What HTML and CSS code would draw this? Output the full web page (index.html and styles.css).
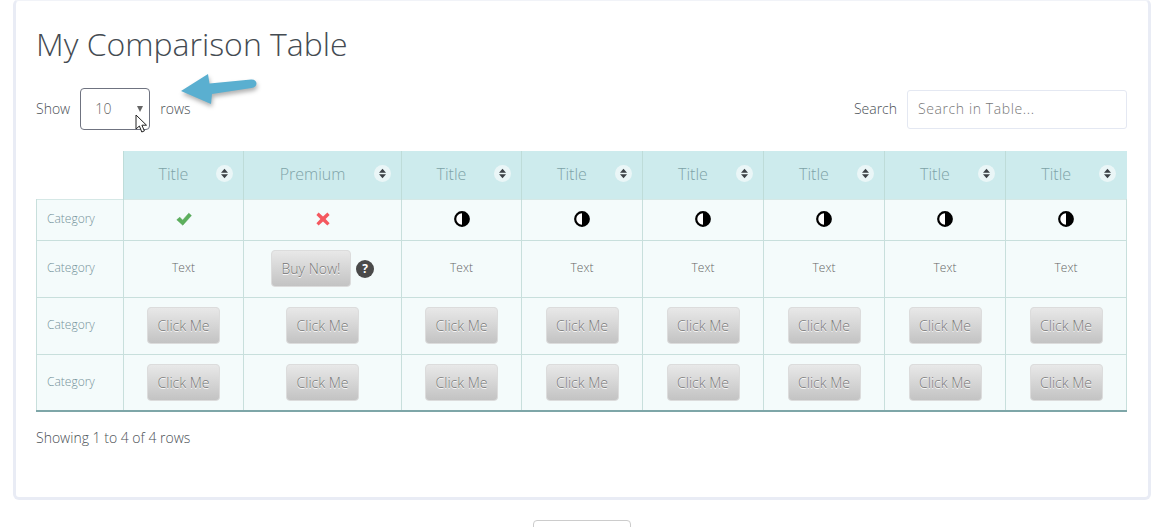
FILE: index.html
```html
<!DOCTYPE html>
<html lang="en">
<head>
<meta charset="utf-8">
<title>My Comparison Table</title>
<link rel="stylesheet" href="styles.css">
</head>
<body>
<svg class="sprites" width="0" height="0" aria-hidden="true">
  <defs>
    <symbol id="sort" viewBox="0 0 17 17"><circle cx="8.5" cy="8.5" r="8.5" fill="#eaf6f7"/><path d="M8.5 3.8 12 7.7H5ZM8.5 13.2 12 9.3H5Z" fill="#3c4146"/></symbol>
    <symbol id="half" viewBox="0 0 16 16"><circle cx="8" cy="8" r="6.800" fill="#fff" stroke="#000" stroke-width="2.200"/><path d="M8 1.200a6.800 6.800 0 0 1 0 13.600Z" fill="#000"/></symbol>
  </defs>
</svg>
<main class="card">
  <h1 class="title">My Comparison Table</h1>
  <div class="controls">
    <div class="show">
      <span class="lbl">Show</span>
      <div class="select"><span class="val">10</span><i class="caret"></i></div>
      <span class="lbl">rows</span>
    </div>
    <div class="search">
      <span class="lbl">Search</span>
      <div class="search-input">Search in Table...</div>
    </div>
  </div>
  <table class="compare">
    <colgroup>
      <col class="c-cat"><col class="c-a"><col class="c-b"><col class="c-a"><col class="c-c"><col class="c-c"><col class="c-c"><col class="c-c"><col class="c-c">
    </colgroup>
    <thead>
      <tr>
        <th class="blank"></th>
        <th><div class="th"><span>Title</span><svg class="sort"><use href="#sort"/></svg></div></th>
        <th><div class="th"><span>Premium</span><svg class="sort"><use href="#sort"/></svg></div></th>
        <th><div class="th"><span>Title</span><svg class="sort"><use href="#sort"/></svg></div></th>
        <th><div class="th"><span>Title</span><svg class="sort"><use href="#sort"/></svg></div></th>
        <th><div class="th"><span>Title</span><svg class="sort"><use href="#sort"/></svg></div></th>
        <th><div class="th"><span>Title</span><svg class="sort"><use href="#sort"/></svg></div></th>
        <th><div class="th"><span>Title</span><svg class="sort"><use href="#sort"/></svg></div></th>
        <th><div class="th"><span>Title</span><svg class="sort"><use href="#sort"/></svg></div></th>
      </tr>
    </thead>
    <tbody>
      <tr class="r1">
        <td class="cat">Category</td>
        <td class="raised"><svg class="ico" viewBox="0 0 16 16"><path d="M.8 8.800 3.800 6.200l2.800 3L12.800 2.200l2.600 2.400-8.600 9.600Z" fill="#5cb05c" stroke="#4a9a4e" stroke-width=".5"/></svg></td>
        <td class="raised"><svg class="ico" viewBox="0 0 16 16"><path d="M3.600 1.600 8 5.600l4.400-4 2.200 2.400L10.600 8l4 4.200-2.200 2.300L8 10.400l-4.400 4.100-2.200-2.300L5.400 8l-4-4Z" fill="#f4585f"/></svg></td>
        <td class="raised"><svg class="ico"><use href="#half"/></svg></td>
        <td class="raised"><svg class="ico"><use href="#half"/></svg></td>
        <td class="raised"><svg class="ico"><use href="#half"/></svg></td>
        <td class="raised"><svg class="ico"><use href="#half"/></svg></td>
        <td class="raised"><svg class="ico"><use href="#half"/></svg></td>
        <td class="raised"><svg class="ico"><use href="#half"/></svg></td>
      </tr>
      <tr class="r2">
        <td class="cat">Category</td>
        <td class="raised">Text</td>
        <td><div class="buy"><span class="btn btn-buy">Buy Now!</span><span class="help">?</span></div></td>
        <td class="raised">Text</td><td class="raised">Text</td><td class="raised">Text</td><td class="raised">Text</td><td class="raised">Text</td><td class="raised">Text</td>
      </tr>
      <tr class="r3">
        <td class="cat">Category</td>
        <td><span class="btn">Click Me</span></td><td><span class="btn">Click Me</span></td><td><span class="btn">Click Me</span></td><td><span class="btn">Click Me</span></td><td><span class="btn">Click Me</span></td><td><span class="btn">Click Me</span></td><td><span class="btn">Click Me</span></td><td><span class="btn">Click Me</span></td>
      </tr>
      <tr class="r3">
        <td class="cat">Category</td>
        <td><span class="btn">Click Me</span></td><td><span class="btn">Click Me</span></td><td><span class="btn">Click Me</span></td><td><span class="btn">Click Me</span></td><td><span class="btn">Click Me</span></td><td><span class="btn">Click Me</span></td><td><span class="btn">Click Me</span></td><td><span class="btn">Click Me</span></td>
      </tr>
    </tbody>
  </table>
  <p class="info">Showing 1 to 4 of 4 rows</p>
  <svg class="arrow" viewBox="0 0 92 42" width="92" height="42" aria-hidden="true">
    <path d="M1 19 28 2l1.500 9.500L71 7.500c3.500-.3 5.500 1.500 5.500 4s-2 4-5 4.500L32 22l-1 10Z" fill="#5aafd0"/>
  </svg>
  <svg class="cursor" viewBox="0 0 14 20" width="14" height="20" aria-hidden="true">
    <path d="M1 1v14l3.400-3 2.400 6 2.600-1.100-2.500-5.700H11.500Z" fill="#fff" stroke="#222" stroke-width="1"/>
  </svg>
</main>
<div class="next-btn"></div>
</body>
</html>
```
FILE: styles.css
```css
* { box-sizing: border-box; }
html, body { margin: 0; height: 527px; overflow: hidden; background: #fff; }
body { font-family: "Open Sans", "Liberation Sans", sans-serif; font-weight: 300; color: #4a4f55; font-size: 14px; }
.sprites { display: block; }
.card {
  position: relative;
  height: 501px;
  margin: -1px 5px 0 13px;
  padding: 19px 21px 0 20px;
  border: 3px solid #e9ecf5;
  border-top: 2px solid #f1f3f8;
  border-radius: 6px;
  background: #fff;
}
.title { margin: 0; font-size: 32px; font-weight: 300; line-height: 48px; color: #444b52; }
.controls { display: flex; justify-content: space-between; align-items: center; height: 42px; margin-top: 20px; }
.show, .search { display: flex; align-items: center; }
.lbl { padding-bottom: 2px; }
.select {
  display: flex; align-items: center; justify-content: space-between;
  width: 70px; height: 42px; margin: 0 10px 0 10px; padding: 0 6px 2px 14px;
  border: 1px solid #6f7380; border-radius: 4px; color: #666;
}
.val { letter-spacing: .3px; }
.caret { width: 0; height: 0; margin-top: 2px; border-left: 3.500px solid transparent; border-right: 3.500px solid transparent; border-top: 6px solid #666; }
.search-input {
  width: 220px; height: 39px; margin-left: 10px; padding: 0 10px; line-height: 35px;
  border: 1px solid #e4e8f2; border-radius: 3px; color: #777; font-size: 14px; letter-spacing: .6px;
}
.compare { table-layout: fixed; width: 1090px; margin-top: 21px; border-collapse: collapse; font-size: 12px; }
.c-cat { width: 87px; } .c-a { width: 120px; } .c-b { width: 158px; } .c-c { width: 121px; }
.compare th { height: 48px; padding: 0 0 2px; background: #cdebed; border-left: 1px solid #bedcd9; font-weight: 300; font-size: 16px; color: #7ea3a8; }
.compare th.blank { background: #fff; border: 0; }
.th { display: flex; align-items: center; justify-content: center; position: relative; padding-right: 20px; }
.sort { position: absolute; right: 10.500px; top: 50%; margin-top: -8.500px; width: 17px; height: 17px; }
.compare td { padding: 0; text-align: center; background: #f4fbfb; border: 1px solid #c8dfdc; color: #666; border-top-color: #d5e8e6; }
.compare tbody tr:last-child td { border-bottom: 2px solid #7ea6a8; }
.compare td.cat { color: #75929a; text-align: left; padding: 0 0 2px 10px; }
.compare td.raised { padding-bottom: 2px; }
.r1 { height: 41px; } .r2, .r3 { height: 57px; }
.ico { display: block; width: 16px; height: 16px; margin: 0 auto; }
.btn {
  display: inline-block; width: 73px; height: 37px; line-height: 35px; font-size: 14px; color: #767676; text-align: center;
  border: 1px solid #dcdcdc; border-radius: 4px; background: linear-gradient(#e8e8e8, #c3c3c3);
  text-shadow: 0 1px 0 #fff; vertical-align: middle;
}
.btn-buy { width: 80px; }
.buy { display: flex; align-items: center; justify-content: center; gap: 5px; }
.help { width: 18px; height: 18px; border-radius: 50%; background: #4a4a4a; color: #fff; font-weight: 700; font-size: 12px; line-height: 18px; text-align: center; }
.info { margin: 16px 0 0; line-height: 20px; color: #4a4f55; }
.arrow { position: absolute; left: 164px; top: 71px; overflow: visible; filter: drop-shadow(1px 3px 2px rgba(0,0,0,.3)); }
.cursor { position: absolute; left: 119px; top: 113px; }
.next-btn { width: 98px; height: 30px; margin: 20px 0 0 533px; border: 1px solid #ccc; border-radius: 4px; background: #fff; }
```
